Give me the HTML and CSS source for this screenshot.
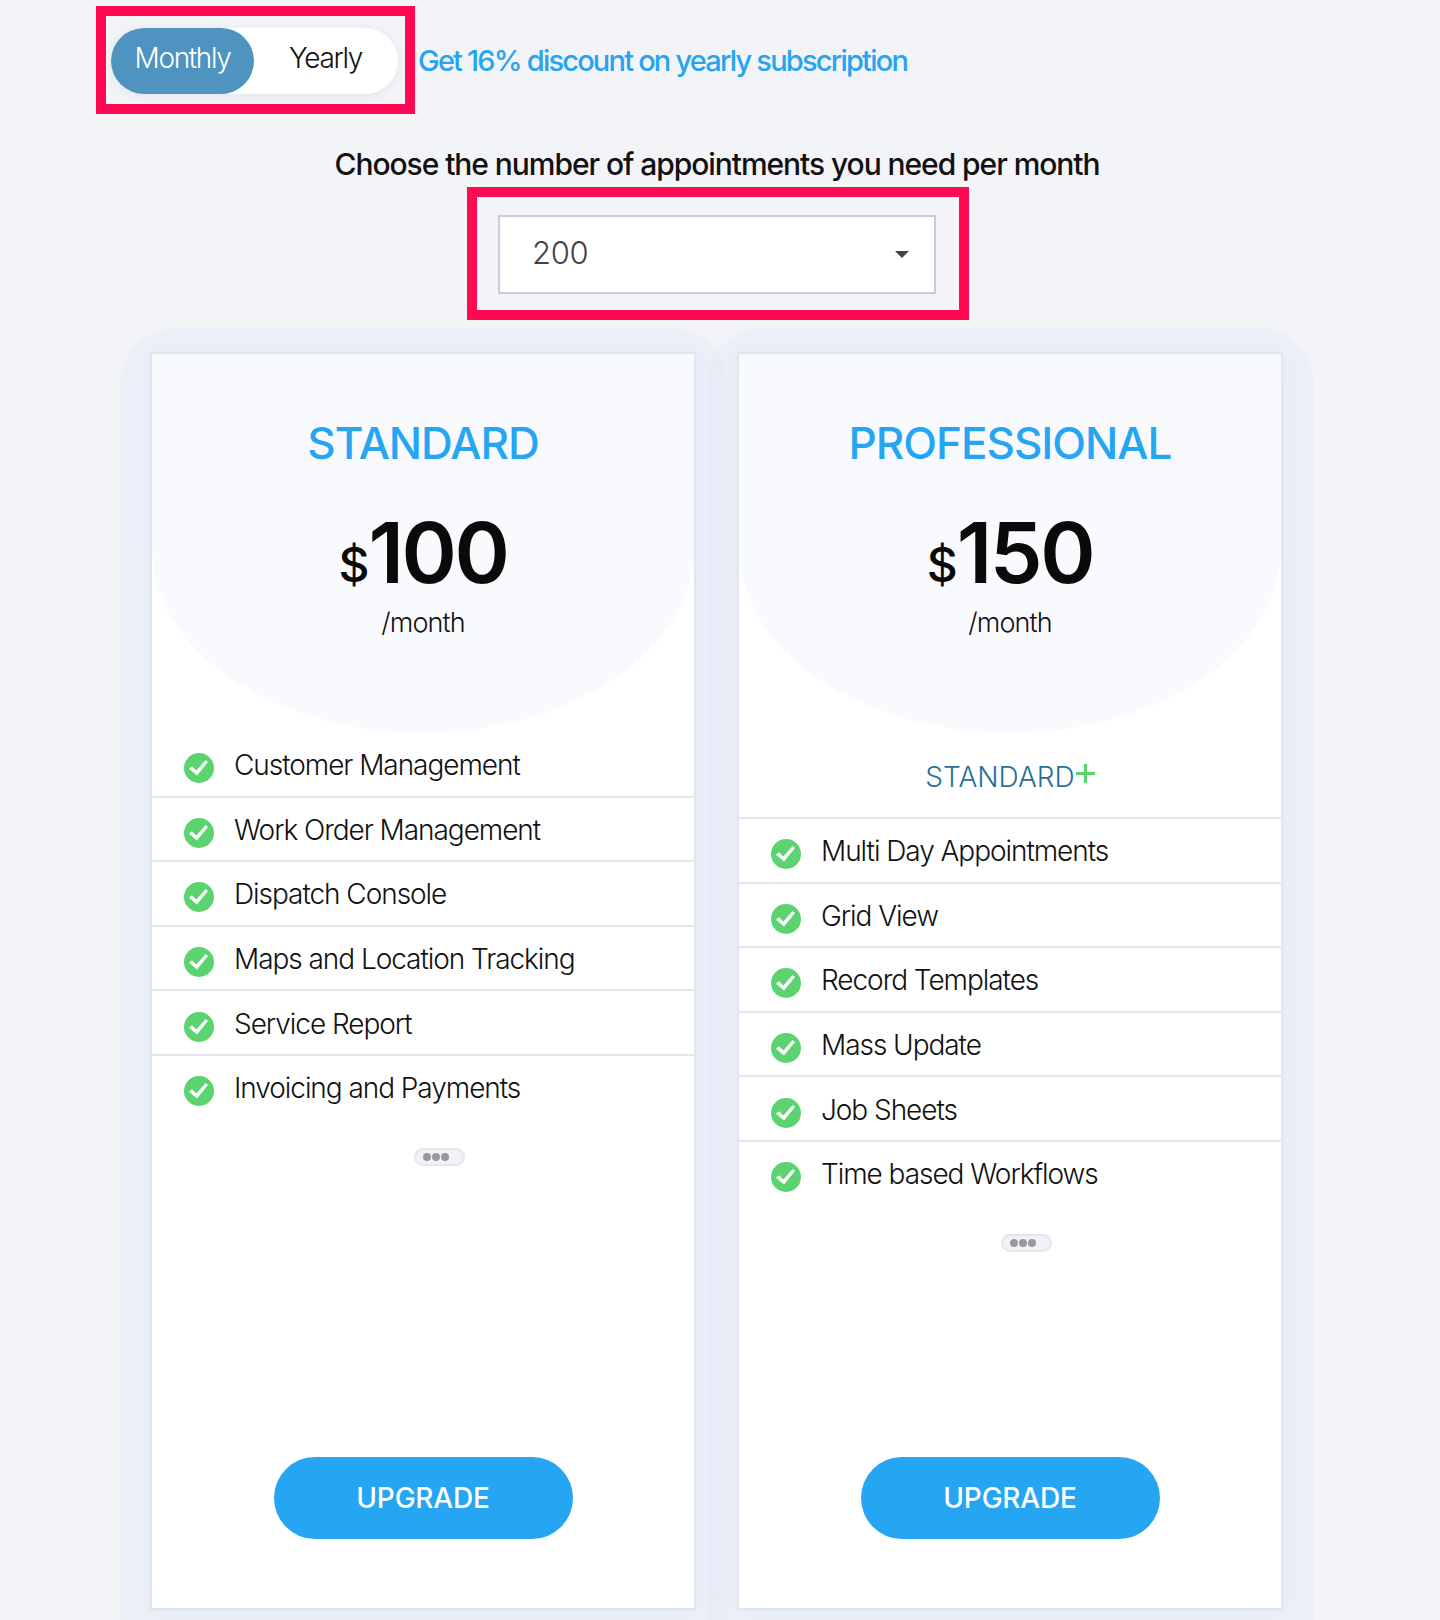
FILE: index.html
```html
<!DOCTYPE html>
<html lang="en">
<head>
<meta charset="utf-8">
<title>Plans</title>
<link rel="stylesheet" href="styles.css">
</head>
<body>
<svg class="defs" width="0" height="0" aria-hidden="true">
  <symbol id="check" viewBox="0 0 30 30">
    <circle cx="15" cy="15" r="15" fill="#5bd36f"/>
    <path d="M5 15.8l3-2.6 4.4 4.2L21.6 7l2.4 2-11 13.6z" fill="#fff"/>
  </symbol>
</svg>
<main class="page">
  <div class="billing">
    <div class="mark mark-toggle">
      <div class="toggle">
        <span class="opt opt-on">Monthly</span>
        <span class="opt">Yearly</span>
      </div>
    </div>
    <a class="discount">Get 16% discount on yearly subscription</a>
  </div>
  <h2 class="choose">Choose the number of appointments you need per month</h2>
  <div class="mark mark-select">
    <div class="select"><span>200</span><i class="caret"></i></div>
  </div>
  <div class="plans">
    <section class="card">
      <header class="dome">
        <h3 class="name">STANDARD</h3>
        <p class="price"><span class="cur">$</span>100</p>
        <p class="per">/month</p>
      </header>
      <ul class="feats">
        <li><svg class="tick"><use href="#check"/></svg>Customer Management</li>
        <li><svg class="tick"><use href="#check"/></svg>Work Order Management</li>
        <li><svg class="tick"><use href="#check"/></svg>Dispatch Console</li>
        <li><svg class="tick"><use href="#check"/></svg>Maps and Location Tracking</li>
        <li><svg class="tick"><use href="#check"/></svg>Service Report</li>
        <li><svg class="tick"><use href="#check"/></svg>Invoicing and Payments</li>
      </ul>
      <div class="more"><b></b><b></b><b></b></div>
      <a class="upgrade">UPGRADE</a>
    </section>
    <section class="card">
      <header class="dome">
        <h3 class="name">PROFESSIONAL</h3>
        <p class="price"><span class="cur">$</span>150</p>
        <p class="per">/month</p>
      </header>
      <div class="plus">STANDARD<span class="plus-mark"></span></div>
      <ul class="feats">
        <li><svg class="tick"><use href="#check"/></svg>Multi Day Appointments</li>
        <li><svg class="tick"><use href="#check"/></svg>Grid View</li>
        <li><svg class="tick"><use href="#check"/></svg>Record Templates</li>
        <li><svg class="tick"><use href="#check"/></svg>Mass Update</li>
        <li><svg class="tick"><use href="#check"/></svg>Job Sheets</li>
        <li><svg class="tick"><use href="#check"/></svg>Time based Workflows</li>
      </ul>
      <div class="more"><b></b><b></b><b></b></div>
      <a class="upgrade">UPGRADE</a>
    </section>
  </div>
</main>
</body>
</html>
```
FILE: styles.css
```css
* { box-sizing: border-box; }
html, body { margin: 0; padding: 0; }
body {
  background: #f3f4f8;
  font-family: Inter, "Noto Sans", sans-serif;
  color: #111;
  height: 1620px;
  overflow: hidden;
}
.defs { position: absolute; }
.page { padding-top: 6px; display: flex; flex-direction: column; }
.billing { display: flex; align-items: center; padding-left: 96px; }
.mark { border: 10px solid #ff0a52; }
.mark-toggle { width: 319px; height: 108px; padding: 12px 7px 10px 5px; }
.toggle {
  display: flex;
  height: 66px;
  width: 287px;
  background: #fff;
  border-radius: 33px;
  box-shadow: 0 2px 10px rgba(190, 200, 225, .35);
}
.opt {
  width: 143px;
  height: 66px;
  border-radius: 33px;
  display: flex;
  align-items: center;
  justify-content: center;
  font-size: 28px;
  font-weight: 300;
  letter-spacing: -1.35px;
  padding-bottom: 6px;
  color: #111;
}
.opt-on { background: #4f93c1; color: #fff; }
.discount {
  margin-left: 3px;
  font-size: 29px;
  font-weight: 500;
  letter-spacing: -1.8px;
  color: #27a4f0;
}
.choose {
  margin: 32px 0 0;
  text-align: center;
  font-size: 30px;
  line-height: 36px;
  font-weight: 500;
  letter-spacing: -1.06px;
  color: #111;
  padding-right: 6px;
}
.mark-select {
  align-self: flex-start;
  margin: 5px 0 0 467px;
  width: 502px;
  height: 133px;
  padding: 18px 23px 16px 21px;
}
.select {
  height: 79px;
  background: #fff;
  border: 2px solid #c6cdd9;
  display: flex;
  align-items: center;
  justify-content: space-between;
  padding: 0 25px 0 32px;
  font-size: 31px;
  font-weight: 300;
  color: #444;
}
.select span { padding-bottom: 4px; letter-spacing: -.3px; }
.caret {
  width: 0;
  height: 0;
  border-left: 7px solid transparent;
  border-right: 7px solid transparent;
  border-top: 7px solid #444;
}
.plans {
  display: flex;
  gap: 41px;
  padding-left: 150px;
  margin-top: 32px;
  isolation: isolate;
}
.card {
  position: relative;
  width: 546px;
  height: 1258px;
  background: #fff;
  border: 2px solid #e1e5ec;
  box-shadow: 0 0 22px rgba(218, 225, 243, .45);
  display: flex;
  flex-direction: column;
}
.card::before {
  content: "";
  position: absolute;
  z-index: -1;
  inset: -26px -33px -60px -32px;
  border-radius: 56px;
  background: rgba(224, 231, 247, .3);
}
.dome {
  height: 379px;
  flex: none;
  background: #f9fafe;
  border-radius: 0 0 272px 272px / 0 0 185px 185px;
  text-align: center;
  padding-top: 63px;
}
.name {
  margin: 0;
  font-size: 44px;
  line-height: 52px;
  font-weight: 500;
  letter-spacing: -1px;
  color: #25a5f2;
}
.price {
  margin: 39px 0 0;
  font-size: 84px;
  line-height: 90px;
  font-weight: 600;
  letter-spacing: -2.4px;
  color: #0a0a0a;
}
.cur { font-size: 48px; font-weight: 500; letter-spacing: -1px; vertical-align: 1px; }
.per {
  margin: -5px 0 0;
  font-size: 27px;
  line-height: 36px;
  font-weight: 300;
  letter-spacing: -.9px;
}
.plus {
  flex: none;
  height: 86px;
  display: flex;
  align-items: center;
  justify-content: center;
  padding-top: 4px;
  font-size: 28px;
  font-weight: 300;
  letter-spacing: 0;
  color: #276f98;
  border-bottom: 2px solid #e3e7ed;
}
.plus-mark {
  width: 19px;
  height: 19px;
  margin: -7px 0 0 1px;
  background:
    linear-gradient(#5bd36f, #5bd36f) center / 100% 3px no-repeat,
    linear-gradient(#5bd36f, #5bd36f) center / 3px 100% no-repeat;
}
.feats { list-style: none; margin: 0; padding: 0; flex: none; }
.feats li {
  height: 64.6px;
  display: flex;
  align-items: center;
  padding: 2px 0 0 32px;
  font-size: 28px;
  font-weight: 300;
  letter-spacing: -1.05px;
  color: #111;
  border-bottom: 2px solid #e3e7ed;
}
.feats li:last-child { border-bottom-color: transparent; }
.tick { width: 30px; height: 30px; margin: 6px 20px 0 0; flex: none; }
.more {
  align-self: flex-start;
  margin: 27px 0 0 262px;
  width: 51px;
  height: 18px;
  display: flex;
  gap: 1px;
  align-items: center;
  padding-left: 7px;
  background: #f0f2f6;
  border: 2px solid #e3e6ed;
  border-radius: 9px;
}
.more b { width: 8px; height: 8px; border-radius: 50%; background: #98989e; }
.upgrade {
  align-self: center;
  margin: auto 0 69px;
  width: 299px;
  height: 82px;
  border-radius: 41px;
  background: #25a5f2;
  color: #fff;
  display: flex;
  align-items: center;
  justify-content: center;
  font-size: 28px;
  font-weight: 500;
  letter-spacing: -.2px;
}
```
